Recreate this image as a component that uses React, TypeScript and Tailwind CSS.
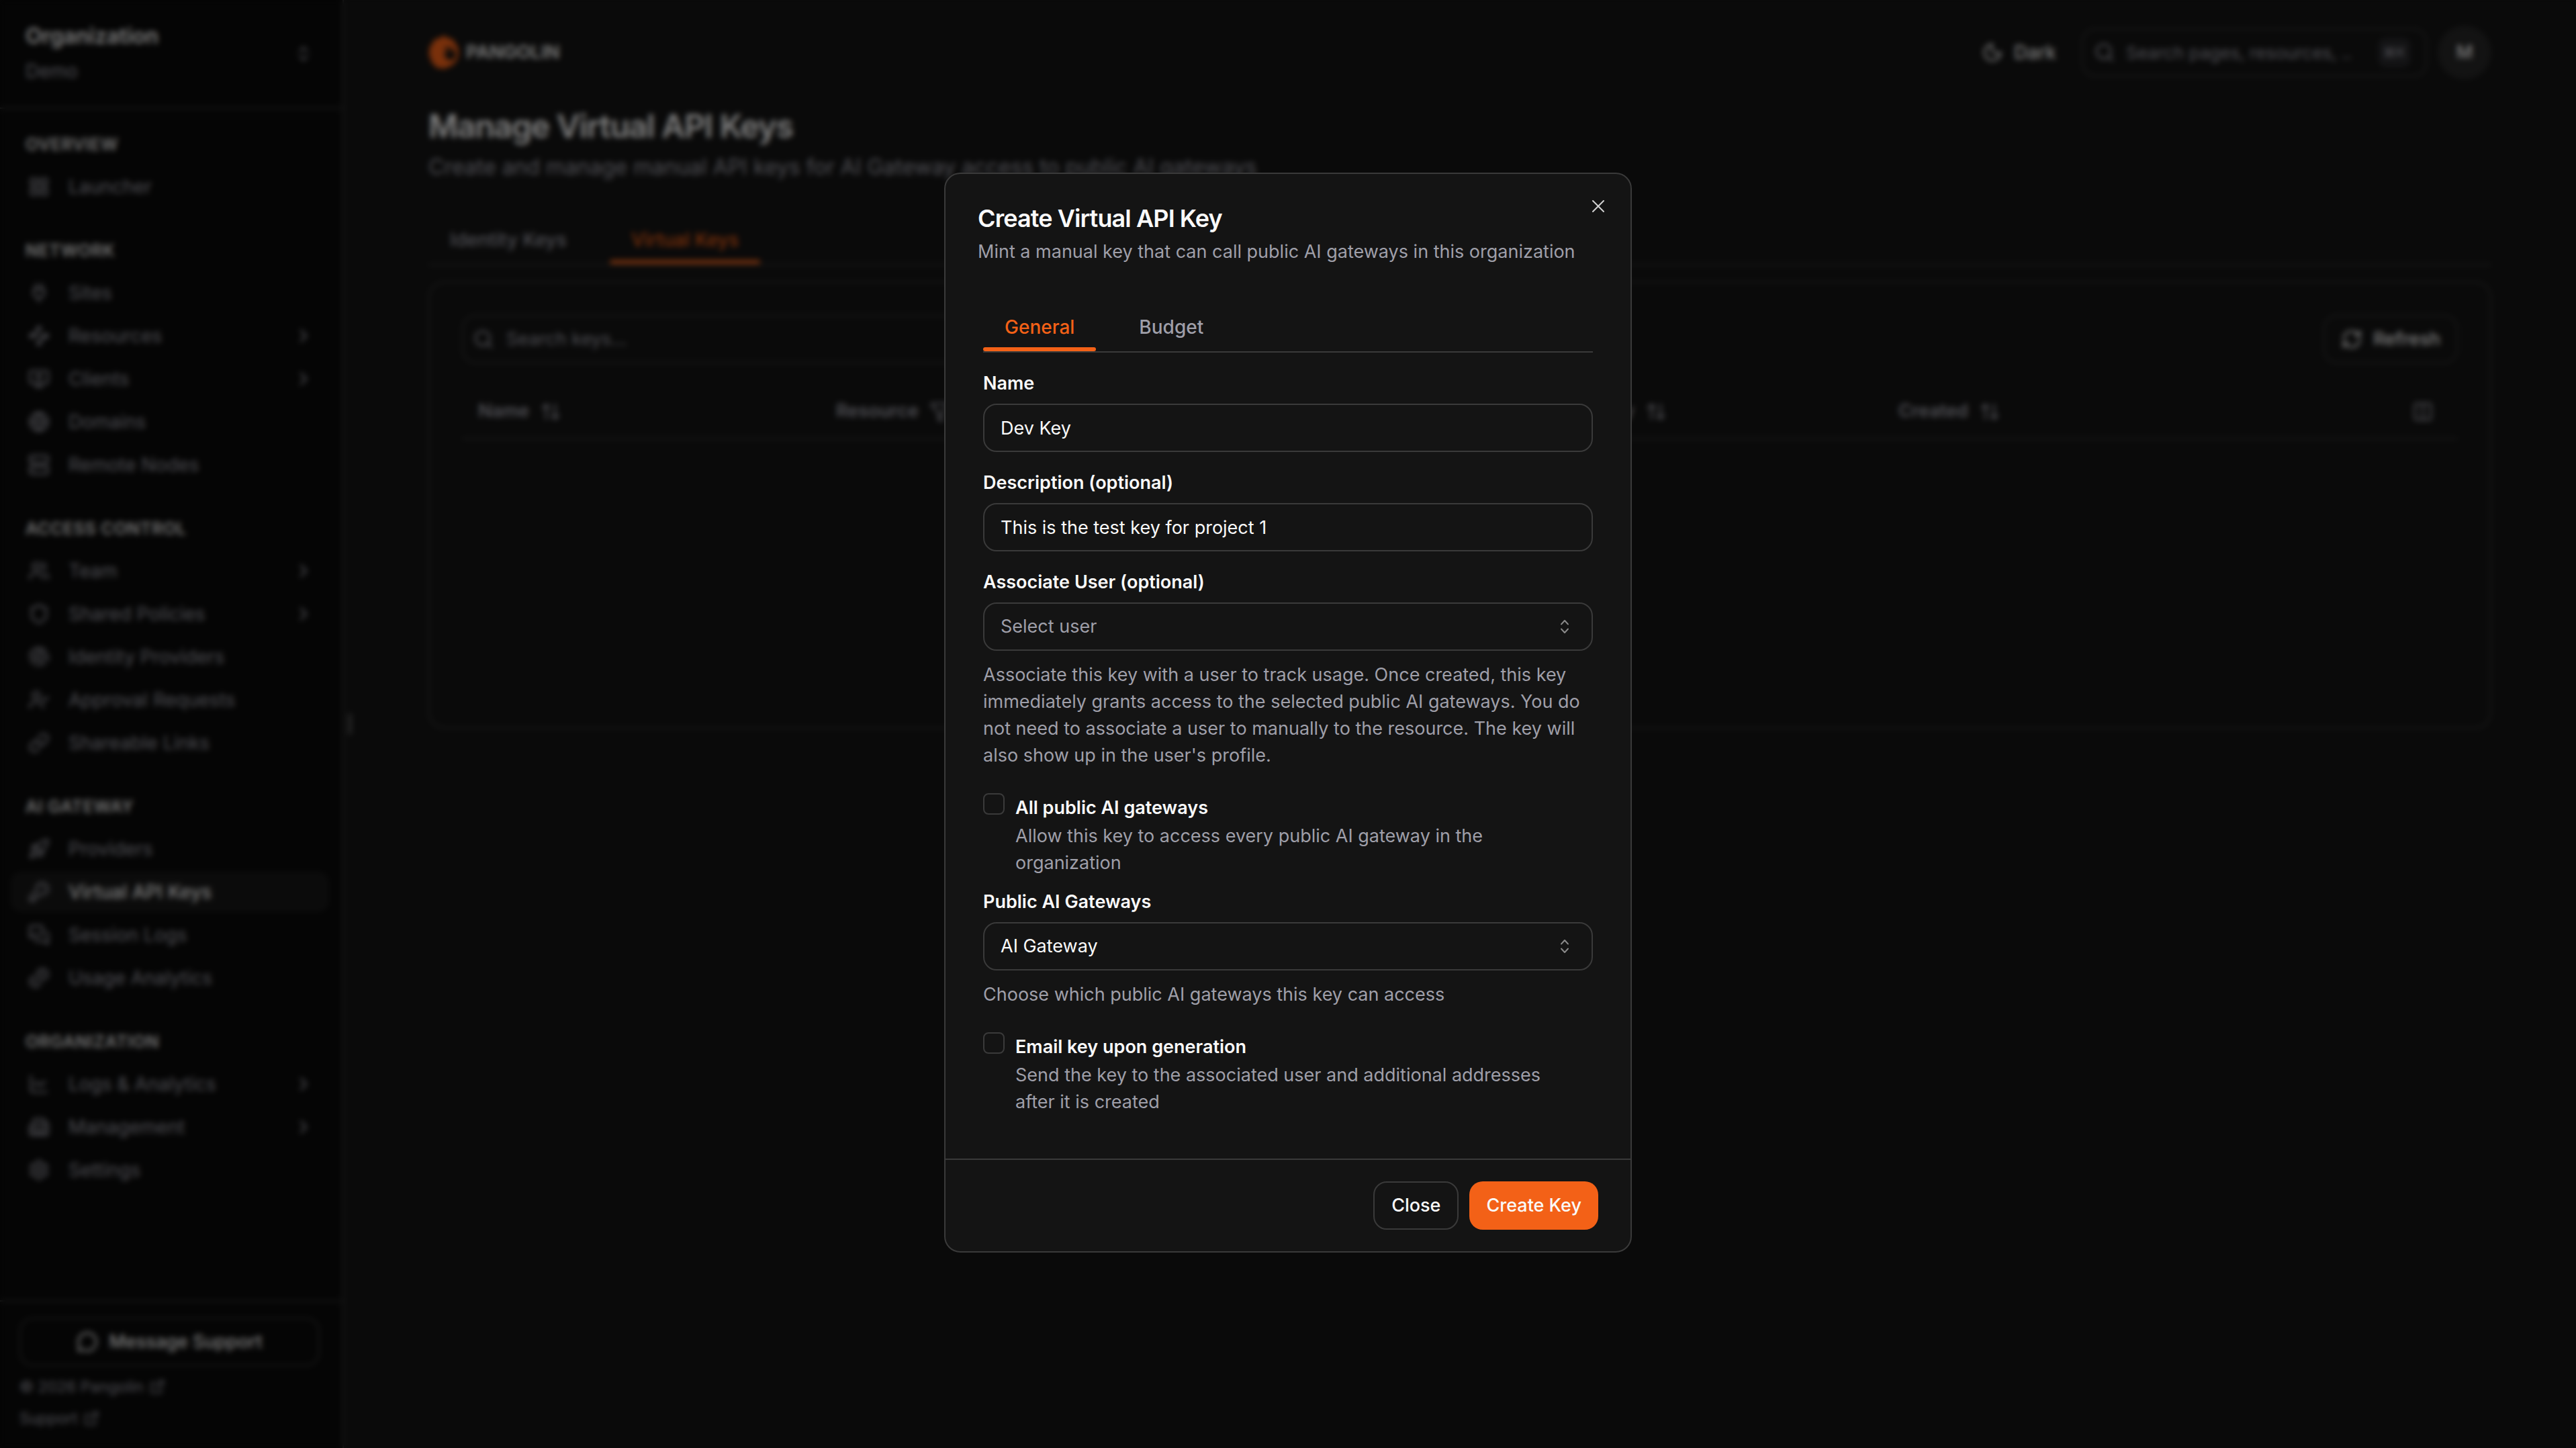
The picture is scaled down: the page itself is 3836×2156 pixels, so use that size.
import { useState } from 'react';
import type { ComponentType, ReactNode } from 'react';
import {
  ArrowUpDown,
  Building2,
  ChartLine,
  ChevronRight,
  ChevronsUpDown,
  Columns2,
  ExternalLink,
  Fingerprint,
  Funnel,
  Globe,
  KeyRound,
  LayoutGrid,
  Link,
  MessageCircle,
  MessagesSquare,
  MonitorUp,
  Moon,
  Plug,
  RefreshCw,
  Rocket,
  Search,
  Server,
  Settings,
  Shield,
  UserCheck,
  Users,
  X,
} from 'lucide-react';

type IconType = ComponentType<{ className?: string }>;
type NavItem = { label: string; icon: IconType; expandable?: boolean; active?: boolean };

function StrokeIcon({ className, children }: { className?: string; children: ReactNode }) {
  return (
    <svg
      viewBox="0 0 24 24"
      fill="none"
      stroke="currentColor"
      strokeWidth="2"
      strokeLinecap="round"
      strokeLinejoin="round"
      className={className}
      aria-hidden="true"
    >
      {children}
    </svg>
  );
}

function Waypoints({ className }: { className?: string }) {
  return (
    <StrokeIcon className={className}>
      <path d="m10.6 5.4-5.2 5.2M18.6 13.4l-5.2 5.2M6 12h12" />
      <circle cx="12" cy="20" r="2" />
      <circle cx="12" cy="4" r="2" />
      <circle cx="20" cy="12" r="2" />
      <circle cx="4" cy="12" r="2" />
    </StrokeIcon>
  );
}

function Coins({ className }: { className?: string }) {
  return (
    <StrokeIcon className={className}>
      <path d="M13.744 17.736a6 6 0 1 1-7.48-7.48M15 6h1v4m-9.866 4.768.866-.5 2 3.464" />
      <circle cx="16" cy="8" r="6" />
    </StrokeIcon>
  );
}

const sections: { title: string; items: NavItem[] }[] = [
  { title: 'OVERVIEW', items: [{ label: 'Launcher', icon: LayoutGrid }] },
  {
    title: 'NETWORK',
    items: [
      { label: 'Sites', icon: Plug },
      { label: 'Resources', icon: Waypoints, expandable: true },
      { label: 'Clients', icon: MonitorUp, expandable: true },
      { label: 'Domains', icon: Globe },
      { label: 'Remote Nodes', icon: Server },
    ],
  },
  {
    title: 'ACCESS CONTROL',
    items: [
      { label: 'Team', icon: Users, expandable: true },
      { label: 'Shared Policies', icon: Shield, expandable: true },
      { label: 'Identity Providers', icon: Fingerprint },
      { label: 'Approval Requests', icon: UserCheck },
      { label: 'Shareable Links', icon: Link },
    ],
  },
  {
    title: 'AI GATEWAY',
    items: [
      { label: 'Providers', icon: Rocket },
      { label: 'Virtual API Keys', icon: KeyRound, active: true },
      { label: 'Session Logs', icon: MessagesSquare },
      { label: 'Usage Analytics', icon: Coins },
    ],
  },
  {
    title: 'ORGANIZATION',
    items: [
      { label: 'Logs & Analytics', icon: ChartLine, expandable: true },
      { label: 'Management', icon: Building2, expandable: true },
      { label: 'Settings', icon: Settings },
    ],
  },
];

function Logo() {
  return (
    <a href="#" className="flex items-center gap-2.5">
      <svg viewBox="0 0 46 50" className="h-[50px] w-[46px]" aria-hidden="true">
        <path
          fill="#f36117"
          d="M23 0l7 4 7 2 3 6 4 5 1 8-1 8-4 7-6 5-8 3-3 2-5-2-7 0-2-5-5-3 0-6-4-5 2-6-1-6 5-4 1-6 6-2z"
        />
        <path fill="#141414" d="M24 17c2 2 3 4 2 6-3 4-3 8 1 11 4 4 10 3 12-1 3-5 1-10-3-13-3-3-7-4-12-3z" />
        <circle cx="31" cy="22" r="2" fill="#f36117" />
      </svg>
      <span className="text-[27px] font-semibold">PANGOLIN</span>
    </a>
  );
}

function Sidebar() {
  return (
    <aside className="relative flex w-[512px] shrink-0 flex-col border-r-2 border-[#3a3a3a] bg-[#0a0a0a]">
      <button type="button" className="flex items-center border-b-2 border-[#3a3a3a] py-[34px] pr-11 pl-[38px] text-left">
        <span className="flex flex-1 flex-col gap-3 leading-10">
          <span className="text-[32px] font-semibold">Organization</span>
          <span className="text-[28px] text-zinc-400">Demo</span>
        </span>
        <ChevronsUpDown className="size-7 text-zinc-400" />
      </button>

      <nav className="flex flex-1 flex-col gap-[49px] pt-[37px] pr-5 pl-4 text-[28px] text-zinc-400">
        {sections.map((section) => (
          <div key={section.title}>
            <h2 className="mb-[17px] px-[22px] text-[25px] leading-8 font-semibold tracking-wide text-neutral-200">
              {section.title}
            </h2>
            <ul className="flex flex-col gap-1">
              {section.items.map(({ label, icon: Icon, expandable, active }) => (
                <li key={label}>
                  <a
                    href="#"
                    className={`flex h-[60px] items-center gap-7 rounded-2xl pr-[22px] pl-[26px] ${
                      active ? 'bg-[#171717] font-medium text-neutral-50' : ''
                    }`}
                  >
                    <Icon className="size-8 text-zinc-400" />
                    <span className="flex-1">{label}</span>
                    {expandable && <ChevronRight className="size-8" />}
                  </a>
                </li>
              ))}
            </ul>
          </div>
        ))}
      </nav>

      <div className="flex flex-col border-t-2 border-[#3a3a3a] pt-6 pr-[34px] pb-6 pl-[29px]">
        <button
          type="button"
          className="mb-[11px] flex h-[72px] items-center justify-center gap-4 rounded-[20px] border-2 border-[#3a3a3a] text-[27px] font-medium"
        >
          <MessageCircle className="size-8" />
          Message Support
        </button>
        <div className="flex flex-col items-start gap-[7px] text-[23px] leading-10 text-zinc-400">
          <a href="#" className="flex items-center gap-2">
            © 2026 Pangolin <ExternalLink className="size-6" />
          </a>
          <a href="#" className="flex items-center gap-2">
            Support <ExternalLink className="size-6" />
          </a>
        </div>
      </div>

      {/* resize handle */}
      <span className="absolute top-1/2 -right-3.5 h-8 w-1.5 -translate-y-1/2 rounded-full bg-[#4a4a4a]" />
    </aside>
  );
}

function Tabs({ tabs, active, onSelect }: { tabs: string[]; active: string; onSelect: (tab: string) => void }) {
  return (
    <div role="tablist" className="flex gap-8 border-b-2 border-[#3a3a3a]">
      {tabs.map((tab) => (
        <button
          key={tab}
          type="button"
          role="tab"
          aria-selected={tab === active}
          onClick={() => onSelect(tab)}
          className={`relative px-8 pb-4 text-[28px] leading-10 font-medium ${
            tab === active ? 'text-[#f36117]' : 'text-zinc-400'
          }`}
        >
          {tab}
          {tab === active && <span className="absolute inset-x-0 bottom-0 h-1.5 rounded-full bg-[#f36117]" />}
        </button>
      ))}
    </div>
  );
}

function ColumnHead({ label, icon: Icon, className }: { label: string; icon: IconType; className: string }) {
  return (
    <th className={`h-20 px-6 font-semibold ${className}`}>
      <button type="button" className="flex items-center gap-4">
        {label} <Icon className="size-8" />
      </button>
    </th>
  );
}

function KeysPage() {
  const [tab, setTab] = useState('Virtual Keys');

  return (
    <main className="min-w-0 flex-1 px-12">
      <div className="mx-auto max-w-[3072px] pt-[38px]">
        <header className="flex h-20 items-center justify-between">
          <Logo />
          <div className="flex items-center gap-4">
            <button type="button" className="mr-[22px] flex items-center gap-4 text-[28px] font-medium">
              <Moon className="size-8" />
              Dark
            </button>
            <label className="flex h-[72px] w-[514px] items-center gap-4 rounded-[20px] border-2 border-[#3a3a3a] pr-[22px] pl-4 text-zinc-400">
              <Search className="size-8 shrink-0" />
              <input
                type="search"
                aria-label="Search pages and resources"
                placeholder="Search pages, resources, ..."
                className="min-w-0 flex-1 bg-transparent text-[26px] outline-none placeholder:text-zinc-400"
              />
              <kbd className="rounded-xl bg-[#27272a] px-2 py-1.5 font-['Inter','DejaVu_Sans',sans-serif] text-xl leading-8">⌘K</kbd>
            </label>
            <button type="button" className="size-20 rounded-full bg-[#262626] text-[27px] font-medium">
              M
            </button>
          </div>
        </header>

        <h1 className="mt-[42px] text-5xl leading-[56px] font-semibold tracking-tight">Manage Virtual API Keys</h1>
        <p className="mt-[9px] text-[32px] leading-[48px] text-zinc-400">
          Create and manage manual API keys for AI Gateway access to public AI gateways
        </p>

        <div className="mt-16">
          <Tabs tabs={['Identity Keys', 'Virtual Keys']} active={tab} onSelect={setTab} />
        </div>

        <section className="mt-6 rounded-3xl border-2 border-[#3a3a3a] px-12 py-12">
          <div className="flex items-center justify-between">
            <label className="flex h-[72px] w-[768px] items-center gap-[18px] rounded-[20px] border-2 border-[#3a3a3a] px-3.5 text-zinc-400">
              <Search className="size-8" />
              <input
                type="search"
                aria-label="Search keys"
                placeholder="Search keys..."
                className="flex-1 bg-transparent text-[27px] outline-none placeholder:text-zinc-400"
              />
            </label>
            <button
              type="button"
              className="flex h-[72px] items-center gap-4 rounded-[20px] border-2 border-[#3a3a3a] px-6 text-[27px] font-medium"
            >
              <RefreshCw className="size-8" />
              Refresh
            </button>
          </div>

          <table className="mt-8 w-full table-fixed text-left text-[27px] text-zinc-400">
            <thead>
              <tr className="border-b-2 border-[#3a3a3a]">
                <ColumnHead label="Name" icon={ArrowUpDown} className="w-[533px]" />
                <ColumnHead label="Resource" icon={Funnel} className="w-[528px]" />
                <ColumnHead label="User" icon={ArrowUpDown} className="w-[518px]" />
                <ColumnHead label="Virtual Key" icon={ArrowUpDown} className="w-[536px]" />
                <ColumnHead label="Created" icon={ArrowUpDown} className="w-[528px]" />
                <th className="pr-9">
                  <button type="button" aria-label="Toggle columns" className="ml-auto block">
                    <Columns2 className="size-8" />
                  </button>
                </th>
              </tr>
            </thead>
            <tbody>
              <tr>
                <td colSpan={6} className="h-[382px]" />
              </tr>
            </tbody>
          </table>
        </section>
      </div>
    </main>
  );
}

const controlClass = 'h-[72px] w-full rounded-[20px] border-2 border-[#3a3a3a] bg-transparent px-6 text-[27px] outline-none';

function Field({ id, label, help, children }: { id: string; label: string; help?: string; children: ReactNode }) {
  return (
    <div className="flex flex-col gap-4">
      <label htmlFor={id} className="leading-7 font-semibold">
        {label}
      </label>
      {children}
      {help && <p className="leading-10 text-zinc-400">{help}</p>}
    </div>
  );
}

function SelectBox({ id, options, muted }: { id: string; options: string[]; muted?: boolean }) {
  return (
    <div className="relative">
      <select id={id} className={`${controlClass} appearance-none ${muted ? 'text-zinc-400' : ''}`}>
        {options.map((option) => (
          <option key={option}>{option}</option>
        ))}
      </select>
      <svg
        viewBox="0 0 15 15"
        fill="none"
        stroke="currentColor"
        strokeLinecap="round"
        strokeLinejoin="round"
        className="pointer-events-none absolute top-5 right-[26px] size-8 text-[#8a8a8a]"
        aria-hidden="true"
      >
        <path d="M5.2 5.8 7.5 3.3 9.8 5.8M5.2 9.2 7.5 11.7 9.8 9.2" />
      </svg>
    </div>
  );
}

function CheckField({ id, label, help }: { id: string; label: string; help: string }) {
  return (
    <div className="flex items-start gap-4">
      <input
        id={id}
        type="checkbox"
        className="mt-1 size-8 shrink-0 appearance-none rounded-lg border-2 border-[#3a3a3a] checked:bg-[#f36117]"
      />
      <div className="flex flex-col gap-2 pt-3 pr-6">
        <label htmlFor={id} className="leading-7 font-semibold">
          {label}
        </label>
        <p className="leading-10 text-zinc-400">{help}</p>
      </div>
    </div>
  );
}

function CreateKeyDialog() {
  const [tab, setTab] = useState('General');
  const [name, setName] = useState('Dev Key');
  const [description, setDescription] = useState('This is the test key for project 1');

  return (
    <div className="fixed inset-0 flex items-start justify-center bg-black/50 pt-[257px] backdrop-blur-[4px]">
      <div
        role="dialog"
        aria-labelledby="dialog-title"
        className="relative w-full max-w-[1024px] rounded-3xl border-2 border-[#3a3a3a] bg-[#141414] text-[27px]"
      >
        <button type="button" aria-label="Close dialog" className="absolute top-8 right-8 text-neutral-300">
          <X className="size-8" strokeWidth={1.5} />
        </button>

        <div className="px-12 pt-12">
          <h2 id="dialog-title" className="text-4xl leading-9 font-semibold tracking-tight">
            Create Virtual API Key
          </h2>
          <p className="mt-3 leading-10 text-zinc-400">
            Mint a manual key that can call public AI gateways in this organization
          </p>
        </div>

        <form className="px-14 pt-[72px] pb-16">
          <Tabs tabs={['General', 'Budget']} active={tab} onSelect={setTab} />
          <div className="mt-8 flex flex-col gap-8">
            <Field id="name" label="Name">
              <input id="name" value={name} onChange={(e) => setName(e.target.value)} className={controlClass} />
            </Field>
            <Field id="description" label="Description (optional)">
              <input
                id="description"
                value={description}
                onChange={(e) => setDescription(e.target.value)}
                className={controlClass}
              />
            </Field>
            <Field
              id="user"
              label="Associate User (optional)"
              help="Associate this key with a user to track usage. Once created, this key immediately grants access to the selected public AI gateways. You do not need to associate a user to manually to the resource. The key will also show up in the user's profile."
            >
              <SelectBox id="user" options={['Select user']} muted />
            </Field>
            <div className="flex flex-col gap-6">
              <CheckField
                id="all-gateways"
                label="All public AI gateways"
                help="Allow this key to access every public AI gateway in the organization"
              />
              <Field id="gateways" label="Public AI Gateways" help="Choose which public AI gateways this key can access">
                <SelectBox id="gateways" options={['AI Gateway']} />
              </Field>
            </div>
            <CheckField
              id="email-key"
              label="Email key upon generation"
              help="Send the key to the associated user and additional addresses after it is created"
            />
          </div>
        </form>

        <div className="flex justify-end gap-4 border-t-2 border-[#3a3a3a] px-12 py-8 font-medium">
          <button type="button" className="h-[72px] rounded-[20px] border-2 border-[#3a3a3a] px-[25px]">
            Close
          </button>
          <button type="button" className="h-[72px] rounded-[20px] bg-[#f36117] px-[25px]">
            Create Key
          </button>
        </div>
      </div>
    </div>
  );
}

export default function App() {
  return (
    <div className="flex min-h-screen bg-[#141414] font-['Inter',sans-serif] text-neutral-50">
      <Sidebar />
      <KeysPage />
      <CreateKeyDialog />
    </div>
  );
}
